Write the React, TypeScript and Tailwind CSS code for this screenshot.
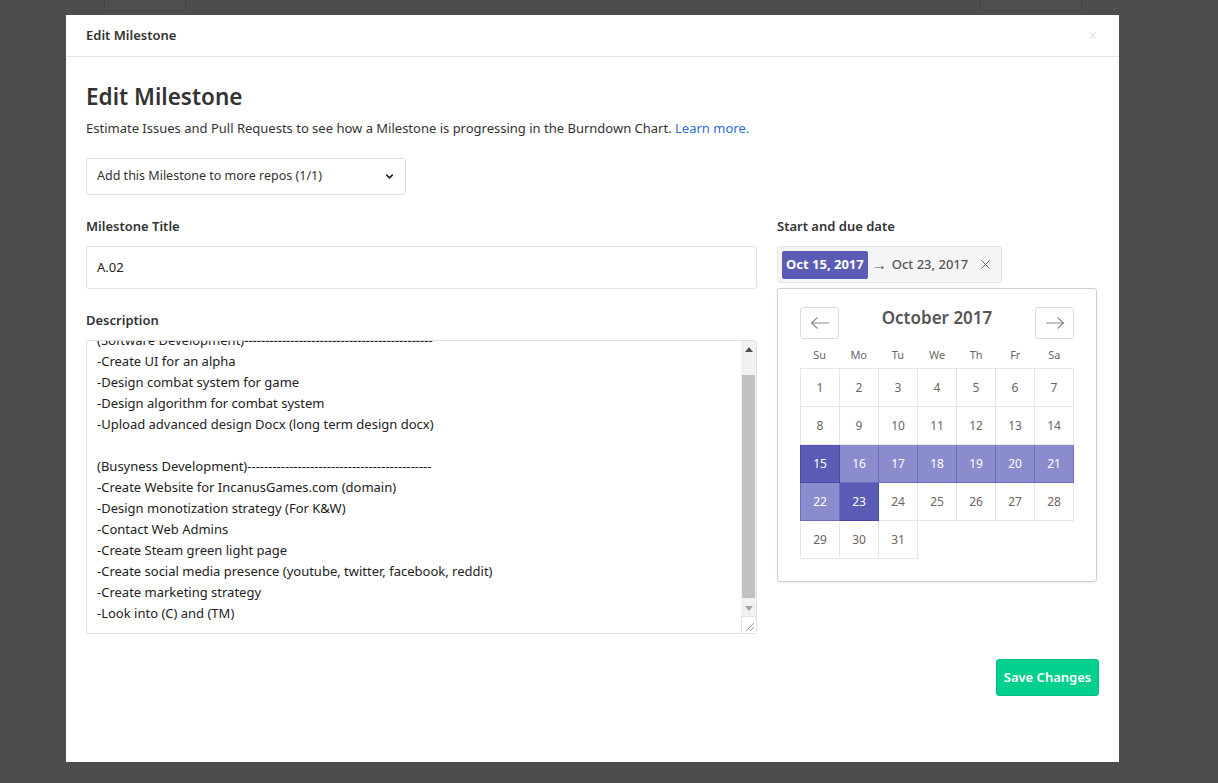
import { useEffect, useRef } from 'react';
import { ChevronDown, X } from 'lucide-react';

const description = [
  '',
  `(Software Development)${'-'.repeat(45)}`,
  '-Create UI for an alpha',
  '-Design combat system for game',
  '-Design algorithm for combat system',
  '-Upload advanced design Docx (long term design docx)',
  '',
  `(Busyness Development)${'-'.repeat(44)}`,
  '-Create Website for IncanusGames.com (domain)',
  '-Design monotization strategy (For K&W)',
  '-Contact Web Admins',
  '-Create Steam green light page',
  '-Create social media presence (youtube, twitter, facebook, reddit)',
  '-Create marketing strategy',
  '-Look into (C) and (TM)',
  '',
].join('\n');

const weeks = [
  [1, 2, 3, 4, 5, 6, 7],
  [8, 9, 10, 11, 12, 13, 14],
  [15, 16, 17, 18, 19, 20, 21],
  [22, 23, 24, 25, 26, 27, 28],
  [29, 30, 31],
];

function dayClass(d: number) {
  if (d === 15 || d === 23) return 'bg-[#5b5cb6] border-[#4647a3] text-white';
  if (d > 15 && d < 23) return 'bg-[#8b8ccd] border-[#6c6dbf] text-white';
  return 'bg-white border-[#e6e6e6] text-[#6e6464]';
}

function Arrow({ dir }: { dir: 'left' | 'right' }) {
  return (
    <svg width="20" height="12" viewBox="0 0 20 12" fill="none" stroke="#8a8a8a" strokeWidth="1.1">
      {dir === 'left' ? (
        <path d="M19 6H1.5M7.5 0.5L1.5 6l6 5.5" />
      ) : (
        <path d="M1 6h17.5M12.5 0.5l6 5.5-6 5.5" />
      )}
    </svg>
  );
}

// classic scrollbar, drawn over the textarea's right edge
function ScrollBar() {
  return (
    <div className="absolute bottom-[1px] right-[1px] top-[1px] flex w-[15px] flex-col bg-[#f1f1f1]">
      <div className="flex h-[16px] items-center justify-center">
        <svg width="8" height="5" viewBox="0 0 8 5">
          <path d="M4 0L8 5H0z" fill="#505050" />
        </svg>
      </div>
      <div className="flex-1 px-[1px]">
        <div className="mt-[18px] h-[223px] bg-[#c1c1c1]" />
      </div>
      <div className="flex h-[16px] items-center justify-center">
        <svg width="8" height="5" viewBox="0 0 8 5">
          <path d="M0 0h8L4 5z" fill="#a3a3a3" />
        </svg>
      </div>
      <div className="flex h-[17px] items-end justify-end border-l border-t border-[#e2e2e2] bg-white p-[2px]">
        <svg width="9" height="9" viewBox="0 0 9 9" stroke="#9a9a9a" strokeWidth="1">
          <path d="M1 9L9 1M5 9L9 5" />
        </svg>
      </div>
    </div>
  );
}

function Calendar() {
  return (
    <div className="mt-[5px] h-[294px] rounded-[3px] border border-[#cfcfcf] bg-white px-[22px] pt-[18px] shadow-[0_1px_2px_rgba(0,0,0,0.08)]">
      <div className="flex items-center justify-between">
        <button className="flex h-[32px] w-[39px] items-center justify-center rounded-[3px] border border-[#dcdcdc] bg-white">
          <Arrow dir="left" />
        </button>
        <span className="-mt-[11px] text-[17px] font-semibold text-[#555]">October 2017</span>
        <button className="flex h-[32px] w-[39px] items-center justify-center rounded-[3px] border border-[#dcdcdc] bg-white">
          <Arrow dir="right" />
        </button>
      </div>
      <div className="mt-[6px] grid h-[20px] grid-cols-7 items-center text-center text-[11px] text-[#666]">
        {['Su', 'Mo', 'Tu', 'We', 'Th', 'Fr', 'Sa'].map((d) => (
          <span key={d}>{d}</span>
        ))}
      </div>
      <table className="mt-[3px] border-collapse">
        <tbody>
          {weeks.map((w, i) => (
            <tr key={i}>
              {w.map((d) => (
                <td
                  key={d}
                  className={`h-[38px] w-[39px] border p-0 text-center text-[12px] ${dayClass(d)}`}
                >
                  {d}
                </td>
              ))}
            </tr>
          ))}
        </tbody>
      </table>
    </div>
  );
}

export default function App() {
  const areaRef = useRef<HTMLTextAreaElement>(null);
  useEffect(() => {
    if (areaRef.current) areaRef.current.scrollTop = 42;
  }, []);

  return (
    <div
      className="relative h-[783px] w-[1218px] overflow-hidden bg-[#4d4d4d] pl-[66px] pt-[15px] text-[#333]"
      style={{ fontFamily: '"Noto Sans", "Open Sans", sans-serif' }}
    >
      {/* page behind the overlay */}
      <div className="absolute left-[104px] top-[-4px] h-[15px] w-[82px] rounded-[3px] border border-[#444] bg-[#4f4f4f]" />
      <div className="absolute left-[980px] top-[-4px] h-[15px] w-[102px] rounded-[3px] border border-[#444] bg-[#4f4f4f]" />

      <div className="relative h-[747px] w-[1053px] bg-white">
        <header className="flex h-[42px] items-center justify-between border-b border-[#e5e5e5] px-5">
          <span className="text-[13px] font-semibold text-[#333]">Edit Milestone</span>
          <X size={11} strokeWidth={1.5} className="mr-[1px] text-[#c4c4c4]" />
        </header>

        <div className="px-5">
          <h1 className="mt-[24px] h-[32px] text-[22.5px] font-semibold leading-[32px] text-[#333]">Edit Milestone</h1>
          <p className="mt-[5px] h-[20px] text-[13px] leading-[20px]">
            Estimate Issues and Pull Requests to see how a Milestone is progressing in the Burndown Chart.{' '}
            <a className="text-[#2c6ed8]">Learn more.</a>
          </p>

          <div className="mt-5 flex h-[37px] w-[320px] items-center justify-between rounded-[3px] border border-[#e0e0e0] pl-[10px] pr-[10px] text-[12.5px]">
            <span>Add this Milestone to more repos (1/1)</span>
            <ChevronDown size={11} strokeWidth={3.5} className="text-[#222]" />
          </div>

          <div className="mt-[21px] grid grid-cols-[671px_322px] gap-x-[20px]">
            <div>
              <label className="block h-[20px] text-[13px] font-semibold leading-[20px]">Milestone Title</label>
              <div className="mt-[10px] flex h-[43px] items-center rounded-[3px] border border-[#e0e0e0] px-[10px] text-[13px] text-[#222]">
                A.02
              </div>
              <label className="mt-[21px] block h-[20px] text-[13px] font-semibold leading-[20px]">Description</label>
              <div className="relative mt-[10px]">
                <textarea
                  ref={areaRef}
                  defaultValue={description}
                  className="block h-[294px] w-full resize-none overflow-hidden whitespace-pre rounded-[3px] border border-[#e0e0e0] py-[10px] pl-[10px] pr-[26px] text-[13px] leading-[21px] text-[#222] outline-none"
                />
                <ScrollBar />
              </div>
            </div>

            <div>
              <label className="block h-[20px] text-[13px] font-semibold leading-[20px]">Start and due date</label>
              <div className="mt-[10px] flex h-[37px] w-[225px] items-center rounded-[3px] border border-[#e6e6e6] bg-[#f5f5f5] pl-[4px] text-[13px]">
                <span className="flex h-[28px] items-center rounded-[2px] bg-[#5b5cb6] px-[4px] font-bold text-white">
                  Oct 15, 2017
                </span>
                <span className="ml-[4px] text-[15px] leading-none text-[#555]">→</span>
                <span className="ml-[5px] font-medium text-[#555]">Oct 23, 2017</span>
                <X size={15} strokeWidth={1.6} className="ml-[10px] text-[#666]" />
              </div>
              <div className="w-[320px]">
                <Calendar />
              </div>
            </div>
          </div>

          <div className="mt-[25px] flex justify-end">
            <button className="h-[37px] w-[103px] rounded-[3px] border border-[#02bd82] bg-[#03d08f] text-[13px] font-semibold text-white">
              Save Changes
            </button>
          </div>
        </div>
      </div>
    </div>
  );
}
